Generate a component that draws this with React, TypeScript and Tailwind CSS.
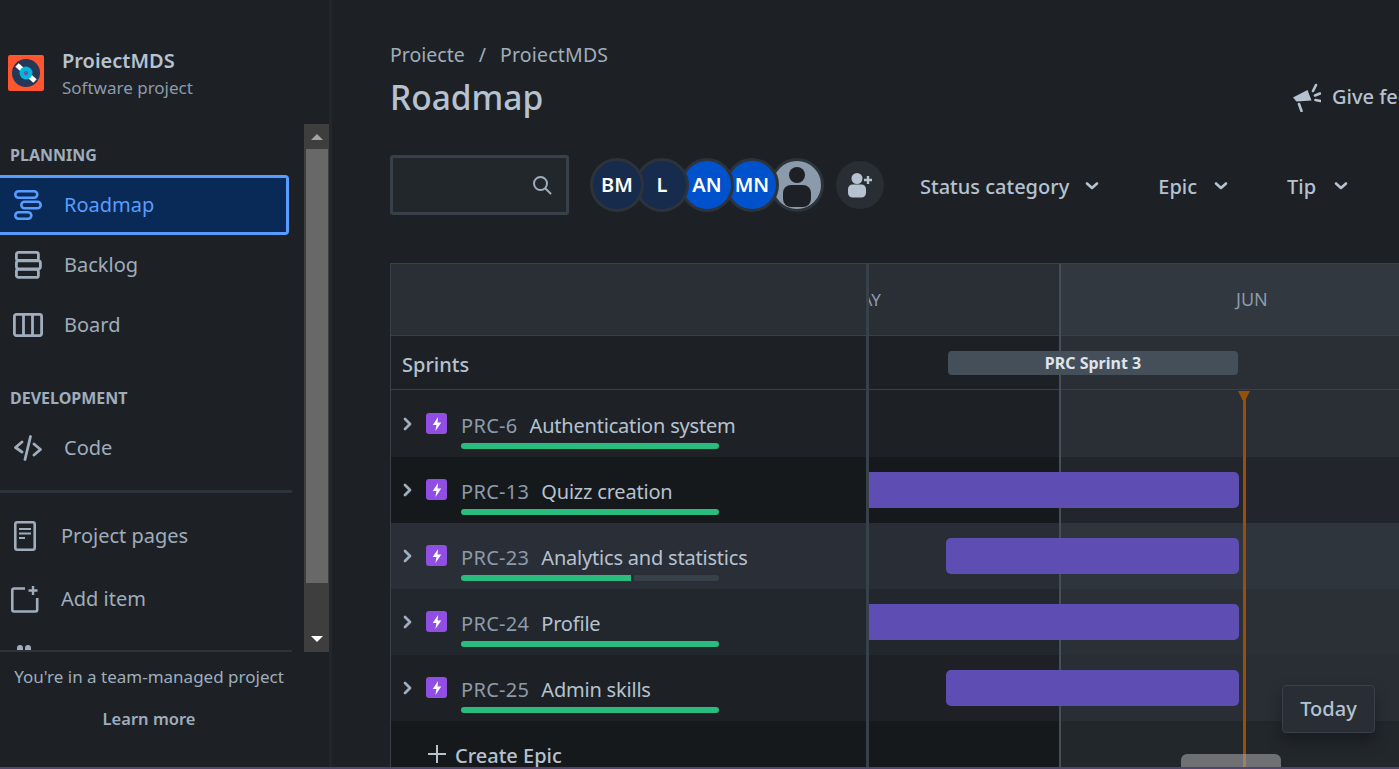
const rows = [
  { id: "PRC-6", title: "Authentication system", done: 258, bg: "bg-[#1e2227]", line: "bg-[linear-gradient(90deg,#1d2125_190px,#2a2e35_190px)]", bar: "" },
  { id: "PRC-13", title: "Quizz creation", done: 258, bg: "bg-[#16191c]", line: "bg-[linear-gradient(90deg,#16191c_190px,#22262c_190px)]", bar: "w-[370px] rounded-r-[5px]" },
  { id: "PRC-23", title: "Analytics and statistics", done: 170, bg: "bg-[#2a2e36]", line: "bg-[linear-gradient(90deg,#292d35_190px,#2f353c_190px)]", bar: "ml-[77px] w-[293px] rounded-[5px]" },
  { id: "PRC-24", title: "Profile", done: 258, bg: "bg-[#22262d]", line: "bg-[linear-gradient(90deg,#22262d_190px,#2b3037_190px)]", bar: "w-[370px] rounded-r-[5px]" },
  { id: "PRC-25", title: "Admin skills", done: 258, bg: "bg-[#1d2125]", line: "bg-[linear-gradient(90deg,#1d2125_190px,#292e34_190px)]", bar: "ml-[77px] w-[293px] rounded-[5px]" },
]

const avatars = [
  { label: "BM", cls: "z-50 bg-[#172b4d]" },
  { label: "L", cls: "z-40 bg-[#172b4d]" },
  { label: "AN", cls: "z-30 bg-[#0052cc]" },
  { label: "MN", cls: "z-20 bg-[#0052cc]" },
]

function Chevron() {
  return (
    <svg width="14" height="10" viewBox="0 0 14 10" fill="none" stroke="#b6c2cf" strokeWidth="2.6" strokeLinecap="round" strokeLinejoin="round">
      <path d="M2 2.5l5 4.5 5-4.5" />
    </svg>
  )
}

function NavItem({ icon, label }: { icon: React.ReactNode; label: string }) {
  return (
    <div className="flex h-[60px] items-center text-[20px] text-[#9fadbc]">
      <div className="flex w-[56px] shrink-0 justify-center">{icon}</div>
      <span className="ml-[8px]">{label}</span>
    </div>
  )
}

function EpicRow({ row }: { row: (typeof rows)[number] }) {
  return (
    <div className="flex h-[66px] shrink-0">
      <div className={`w-[475px] shrink-0 pl-[11px] ${row.bg}`}>
        <div className="flex h-[66px] items-start pt-[23px]">
          <svg className="mt-[3px] w-[12px] shrink-0" width="12" height="14" viewBox="0 0 12 14" fill="none" stroke="#9fadbc" strokeWidth="2.8" strokeLinecap="round" strokeLinejoin="round">
            <path d="M3 2l5 5-5 5" />
          </svg>
          <div className="-mt-[1px] ml-[12px] flex h-[21px] w-[21px] shrink-0 items-center justify-center rounded-[3px] bg-[#904ee2]">
            <svg width="12" height="16" viewBox="0 0 11 15" fill="#fff">
              <path d="M6.5 1L1.5 8.5H5L4 14l5.5-8H6z" />
            </svg>
          </div>
          <div className="ml-[14px] w-[258px] shrink-0">
            <div className="flex h-[24px] items-center gap-[12px] whitespace-nowrap text-[20px] leading-[24px]">
              <span className="tracking-[0.3px] text-[#8c9bab]">{row.id}</span>
              <span className="tracking-[-0.2px] text-[#b6c2cf]">{row.title}</span>
            </div>
            <div className="mt-[5px] flex h-[6px] gap-[3px]">
              <div className={row.done === 258 ? "h-[6px] w-[258px] rounded-[3px] bg-[#2abb7f]" : "h-[6px] w-[170px] rounded-l-[3px] bg-[#2abb7f]"} />
              {row.done !== 258 && <div className="h-[6px] flex-1 rounded-r-[3px] bg-[#38414a]" />}
            </div>
          </div>
        </div>
      </div>
      <div className="w-[3px] shrink-0 bg-[#38414a]" />
      <div className={`flex-1 pt-[15px] ${row.line}`}>
        {row.bar && <div className={`relative z-10 h-[36px] bg-[#5e4db2] ${row.bar}`} />}
      </div>
    </div>
  )
}

export default function App() {
  return (
    <div className="flex h-screen w-screen flex-col overflow-hidden bg-[#1d2125] font-['Noto_Sans',sans-serif]">
      <div className="flex min-h-0 flex-1">
        {/* sidebar */}
        <aside className="flex w-[329px] shrink-0 flex-col">
          <div className="flex h-[124px] shrink-0 items-start pl-[8px] pt-[44px]">
            <svg className="mt-[11px]" width="36" height="36" viewBox="0 0 36 36">
              <rect width="36" height="36" rx="2" fill="#ff5630" />
              <circle cx="18" cy="18" r="14" fill="#253858" />
              <path d="M9 10l18 16" stroke="#fff" strokeWidth="5" />
              <circle cx="18" cy="18" r="6.5" fill="#00b8d9" />
              <circle cx="18" cy="18" r="2.2" fill="#6554c0" />
            </svg>
            <div className="ml-[18px]">
              <div className="text-[20px] font-semibold leading-[34px] text-[#b6c2cf]">ProiectMDS</div>
              <div className="-mt-[2px] text-[17px] leading-[24px] text-[#8c9bab]">Software project</div>
            </div>
          </div>

          <div className="flex h-[528px] shrink-0">
            <div className="w-[304px] shrink-0">
              <div className="h-[526px] w-[292px] overflow-hidden">
                <div className="flex h-[51px] items-end pb-[9px] pl-[10px] text-[16px] font-bold leading-[22px] text-[#9fadbc]">PLANNING</div>
                <div className="flex h-[60px] w-[289px] items-center rounded-r-[4px] border-[3px] border-l-0 border-[#579dff] bg-[#092957] text-[20px] text-[#579dff]">
                  <div className="flex w-[56px] shrink-0 justify-center">
                    <svg width="28" height="30" viewBox="0 0 28 30" fill="none" stroke="#579dff" strokeWidth="2.6">
                      <rect x="1.3" y="1.3" width="22" height="6.4" rx="3.2" />
                      <rect x="7.3" y="11.8" width="19.4" height="6.4" rx="3.2" />
                      <rect x="1.3" y="22.3" width="16" height="6.4" rx="3.2" />
                    </svg>
                  </div>
                  <span className="ml-[8px]">Roadmap</span>
                </div>
                <NavItem
                  label="Backlog"
                  icon={
                    <svg width="28" height="28" viewBox="0 0 28 28" fill="none" stroke="#9fadbc" strokeWidth="2.8" strokeLinejoin="round">
                      <rect x="2.4" y="1.4" width="22" height="8" rx="2" />
                      <rect x="2.4" y="9.8" width="24" height="8" rx="2" />
                      <rect x="2.4" y="18.4" width="22" height="8" rx="2" />
                    </svg>
                  }
                />
                <NavItem
                  label="Board"
                  icon={
                    <svg width="30" height="24" viewBox="0 0 30 24" fill="none" stroke="#9fadbc" strokeWidth="2.8">
                      <rect x="1.4" y="1.4" width="27.2" height="21.2" rx="2" />
                      <path d="M10.5 1.4v21.2M19.5 1.4v21.2" />
                    </svg>
                  }
                />
                <div className="flex h-[63px] items-end pb-[9px] pl-[10px] text-[16px] font-bold leading-[22px] text-[#9fadbc]">DEVELOPMENT</div>
                <NavItem
                  label="Code"
                  icon={
                    <svg width="28" height="26" viewBox="0 0 28 26" fill="none" stroke="#9fadbc" strokeWidth="2.8" strokeLinecap="round" strokeLinejoin="round">
                      <path d="M8 7l-6.5 5.5L8 17M20 9l6.5 5.5L20 20M16.5 1.5L11 24.5" />
                    </svg>
                  }
                />
                <div className="mt-[12px] h-[3px] bg-[#2c333a]" />
                <div className="mt-[13px] flex h-[60px] items-center text-[20px] text-[#9fadbc]">
                  <div className="flex w-[50px] shrink-0 justify-center">
                    <svg width="22" height="30" viewBox="0 0 22 30" fill="none" stroke="#9fadbc" strokeWidth="2.6" strokeLinejoin="round">
                      <rect x="1.3" y="1.3" width="19.4" height="27.4" rx="2" />
                      <path d="M5 8h12M5 12.5h12M5 17h6" strokeWidth="2.2" />
                    </svg>
                  </div>
                  <span className="ml-[11px]">Project pages</span>
                </div>
                <div className="mt-[3px] flex h-[60px] items-center text-[20px] text-[#9fadbc]">
                  <div className="flex w-[50px] shrink-0 justify-center">
                    <svg width="28" height="28" viewBox="0 0 28 28" fill="none" stroke="#9fadbc" strokeWidth="2.6" strokeLinejoin="round">
                      <path d="M14 3.5H3a1.7 1.7 0 0 0-1.7 1.7v19.6A1.7 1.7 0 0 0 3 26.5h21.5a1.7 1.7 0 0 0 1.7-1.7V13" />
                      <path d="M22 1v9M17.5 5.5h9" strokeWidth="2.4" />
                    </svg>
                  </div>
                  <span className="ml-[11px]">Add item</span>
                </div>
                <div className="ml-[17px] mt-[16px] flex gap-[2px]">
                  <div className="h-[8px] w-[6px] rounded-t-[3px] bg-[#9fadbc]" />
                  <div className="h-[8px] w-[6px] rounded-t-[3px] bg-[#9fadbc]" />
                </div>
              </div>
              <div className="h-[2px] w-[292px] bg-[#2c333a]" />
            </div>
            {/* scrollbar */}
            <div className="flex w-[25px] shrink-0 flex-col items-center bg-[#3e3e3e]">
              <div className="flex h-[25px] w-full shrink-0 items-center justify-center">
                <div className="h-0 w-0 border-x-[6px] border-b-[6px] border-x-transparent border-b-[#a3a3a3]" />
              </div>
              <div className="h-[434px] w-[22px] shrink-0 bg-[#686868]" />
              <div className="flex flex-1 items-end justify-center pb-[10px]">
                <div className="h-0 w-0 border-x-[6px] border-t-[6px] border-x-transparent border-t-white" />
              </div>
            </div>
          </div>

          <div className="flex flex-1 flex-col items-center pr-[31px] pt-[12px] text-[#9fadbc]">
            <div className="whitespace-nowrap text-[17px] leading-[26px]">You're in a team-managed project</div>
            <div className="mt-[16px] text-[16.5px] font-semibold leading-[26px]">Learn more</div>
          </div>
        </aside>

        <div className="w-[3px] shrink-0 bg-[#23272c]" />

        {/* main */}
        <main className="flex min-w-0 flex-1 flex-col overflow-hidden bg-[#1d2125] pl-[58px]">
          <div className="mt-[39px] flex h-[31px] shrink-0 items-center gap-[14px] text-[19.5px] text-[#9fadbc]">
            <span>Proiecte</span>
            <span>/</span>
            <span className="tracking-[0.2px]">ProiectMDS</span>
          </div>
          <div className="mt-[2px] flex h-[50px] shrink-0 items-center justify-between whitespace-nowrap">
            <h1 className="text-[33.5px] font-medium leading-[50px] text-[#b6c2cf]">Roadmap</h1>
            <div className="flex shrink-0 translate-x-[73px] items-center gap-[11px] text-[20px] font-medium text-[#b6c2cf]">
              <svg width="29" height="29" viewBox="0 0 29 29" fill="#b6c2cf">
                <path d="M1 14.5L15.5 7l4 10.5-15 1z" />
                <path d="M7 21l2.5 7" stroke="#b6c2cf" strokeWidth="2.6" strokeLinecap="round" />
                <path d="M21 8l3-6M23 12.5l5-2M23.5 17l5 1" stroke="#b6c2cf" strokeWidth="2.6" strokeLinecap="round" />
              </svg>
              <span className="w-[140px]">Give feedback</span>
            </div>
          </div>

          <div className="mt-[33px] flex h-[60px] shrink-0 items-center">
            <div className="flex h-[60px] w-[179px] items-center justify-end rounded-[3px] border-[3px] border-[#38414a] bg-[#22272b] pr-[14px]">
              <svg width="20" height="20" viewBox="0 0 20 20" fill="none" stroke="#9fadbc" strokeWidth="2" strokeLinecap="round">
                <circle cx="8.5" cy="8.5" r="6.5" />
                <path d="M13.5 13.5l5 5" />
              </svg>
            </div>
            <div className="ml-[21px] flex items-center">
              {avatars.map((a, i) => (
                <div
                  key={a.label}
                  className={`relative flex h-[54px] w-[54px] shrink-0 items-center justify-center rounded-full border-[3px] border-[#2c333a] text-[20px] font-semibold text-white ${a.cls} ${i > 0 ? "-ml-[9px]" : ""}`}
                >
                  {a.label}
                </div>
              ))}
              <div className="relative z-10 -ml-[9px] flex h-[54px] w-[54px] shrink-0 items-center justify-center overflow-hidden rounded-full border-[3px] border-[#2c333a] bg-[#8c9bab]">
                <svg width="48" height="48" viewBox="0 0 48 48" fill="#1d2125">
                  <circle cx="24" cy="14" r="8" />
                  <path d="M10 32a8 8 0 0 1 8-8h12a8 8 0 0 1 8 8v6a8 8 0 0 1-8 8H18a8 8 0 0 1-8-8z" />
                </svg>
              </div>
            </div>
            <div className="ml-[12px] flex h-[48px] w-[48px] shrink-0 items-center justify-center rounded-full bg-[#282e33]">
              <svg width="28" height="28" viewBox="0 0 28 28" fill="#b6c2cf">
                <circle cx="11" cy="7.5" r="5.5" />
                <path d="M2 18a4.5 4.5 0 0 1 4.5-4.5h9A4.5 4.5 0 0 1 20 18v4a4.5 4.5 0 0 1-4.5 4.5h-9A4.5 4.5 0 0 1 2 22z" />
                <path d="M18 9h8M22 5v8" stroke="#b6c2cf" strokeWidth="2.4" />
              </svg>
            </div>
            <div className="ml-[36px] mt-[4px] flex shrink-0 items-center whitespace-nowrap text-[20px] font-medium text-[#b6c2cf]">
              <span>Status category</span>
              <span className="mb-[2px] ml-[16px]"><Chevron /></span>
              <span className="ml-[59px]">Epic</span>
              <span className="mb-[2px] ml-[17px]"><Chevron /></span>
              <span className="ml-[59px]">Tip</span>
              <span className="mb-[2px] ml-[18px]"><Chevron /></span>
            </div>
          </div>

          {/* roadmap table */}
          <div className="relative mt-[48px] flex min-h-0 flex-1 flex-col overflow-hidden border-l border-t border-[#38414a]">
            <div className="absolute bottom-0 left-[668px] top-0 w-[2px] bg-[#454f59]" />

            <div className="flex h-[72px] shrink-0 border-b border-[#38414a] bg-[#2a2f36]">
              <div className="w-[475px] shrink-0" />
              <div className="w-[3px] shrink-0 bg-[#38414a]" />
              <div className="flex w-[190px] shrink-0 items-center overflow-hidden text-[17px] text-[#8c9bab]">
                <span className="-ml-[23px] whitespace-nowrap">MAY</span>
              </div>
              <div className="flex flex-1 items-center bg-[#32383f] pl-[177px] text-[18px] text-[#8c9bab]">
                <span>JUN</span>
              </div>
            </div>

            <div className="flex h-[54px] shrink-0 border-b border-[#38414a]">
              <div className="flex w-[475px] shrink-0 items-center bg-[#1d2125] pl-[11px] pt-[4px] text-[20px] font-medium text-[#b6c2cf]">Sprints</div>
              <div className="w-[3px] shrink-0 bg-[#38414a]" />
              <div className="flex-1 bg-[linear-gradient(90deg,#1d2125_190px,#2a2e35_190px)] pt-[15px]">
                <div className="relative z-10 ml-[79px] flex h-[24px] w-[290px] items-center justify-center rounded-[4px] bg-[#454f59] text-[16px] font-bold text-[#dee4ea]">PRC Sprint 3</div>
              </div>
            </div>

            <div className="flex h-[1px] shrink-0">
              <div className="w-[475px] shrink-0 bg-[#1e2227]" />
              <div className="w-[3px] shrink-0 bg-[#38414a]" />
              <div className="flex-1 bg-[linear-gradient(90deg,#1d2125_190px,#2a2e35_190px)]" />
            </div>

            {rows.map((row) => (
              <EpicRow key={row.id} row={row} />
            ))}

            <div className="flex min-h-0 flex-1">
              <div className="flex w-[475px] shrink-0 items-start bg-[#16191c] pl-[36px] pt-[22px] text-[20px] font-medium leading-[26px] text-[#b6c2cf]">
                <svg className="mt-[1px]" width="20" height="20" viewBox="0 0 20 20" stroke="#b6c2cf" strokeWidth="2">
                  <path d="M10 1v18M1 10h18" />
                </svg>
                <span className="ml-[8px] whitespace-nowrap">Create Epic</span>
              </div>
              <div className="w-[3px] shrink-0 bg-[#38414a]" />
              <div className="flex-1 bg-[linear-gradient(90deg,#16191c_190px,#22272c_190px)]" />
            </div>

            {/* today marker */}
            <div className="absolute bottom-0 left-[852px] top-[127px] z-20 w-[3px] bg-[#974f0c]" />
            <div className="absolute left-[847px] top-[127px] z-20 h-0 w-0 border-x-[6px] border-t-[12px] border-x-transparent border-t-[#974f0c]" />
            <div className="absolute bottom-0 left-[790px] z-30 h-[13px] w-[100px] rounded-t-[6px] bg-[#a1a1a1]/60" />
            <div className="absolute left-[891px] top-[421px] z-30 flex h-[48px] w-[93px] items-center justify-center rounded-[4px] border border-[#38414a] bg-[#282e33] text-[20px] font-medium text-[#b6c2cf] shadow-[0_8px_16px_rgba(0,0,0,0.3)]">Today</div>
          </div>
        </main>
      </div>
      <div className="h-[2px] shrink-0 bg-[#52456e]" />
    </div>
  )
}
